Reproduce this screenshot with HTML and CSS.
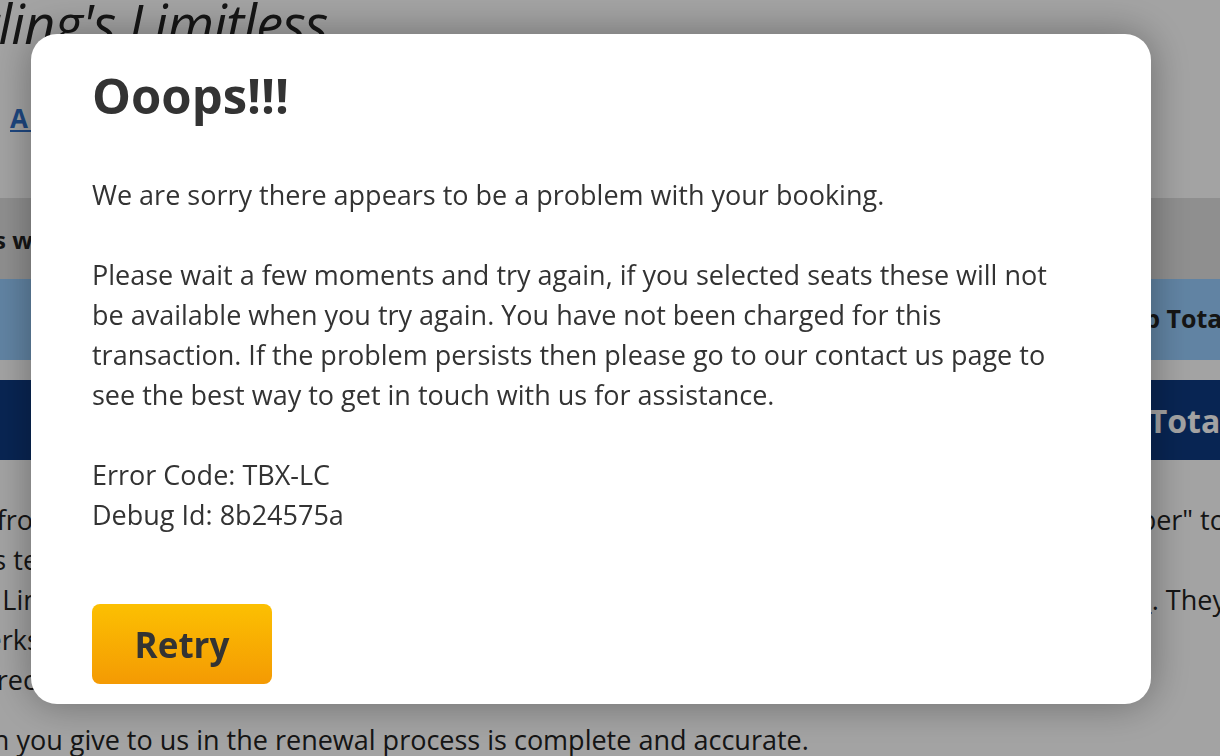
FILE: index.html
```html
<!DOCTYPE html>
<html lang="en">
<head>
    <meta charset="UTF-8">
    <meta name="viewport" content="width=device-width, initial-scale=1.0">
    <title>Renew your Limitless card</title>
    <link rel="stylesheet" href="styles.css">
</head>
<body>
    <div class="page">
        <h1 class="title">Sterling's Limitless</h1>
        <p class="crumbs"><a href="#">A guide to renewing your card</a></p>

        <div class="notice">Items will be held for 15 minutes while you complete your renewal.</div>
        <div class="row row-sub"><span>Sub Total</span></div>
        <div class="row row-total"><span>Total</span></div>

        <div class="terms">
            <div class="line">
                <span>is from the day you renew.</span>
                <span>For someone else, select "Renew Member" to</span>
            </div>
            <div class="line">his terms will carry over to the new card.</div>
            <div class="line">
                <span>of Limitless are listed</span>
                <span>on our <a href="#">membership page</a>. They</span>
            </div>
            <div class="line">perks start as soon as the renewal is confirmed.</div>
            <div class="line">is received by our team.</div>
        </div>
        <p class="closing">Please check the information you give to us in the renewal process is complete and accurate.</p>
    </div>

    <div class="overlay">
        <div class="modal" role="dialog">
            <h2>Ooops!!!</h2>
            <p>We are sorry there appears to be a problem with your booking.</p>
            <p>Please wait a few moments and try again, if you selected seats these will not be available when you try again. You have not been charged for this transaction. If the problem persists then please go to our contact us page to see the best way to get in touch with us for assistance.</p>
            <p class="codes">Error Code: TBX-LC<br>Debug Id: 8b24575a</p>
            <button class="retry">Retry</button>
        </div>
    </div>
</body>
</html>
```

FILE: styles.css
```css
body {
    margin: 0;
    overflow: hidden;
    font-family: 'Open Sans', 'Noto Sans', sans-serif;
    color: #222;
    background-color: #fff;
}

/* page behind the dialog */
.page {
    width: 1330px;
    margin-left: -80px;
}
.title {
    margin: -2px 0 0 -12px;
    font-size: 54px;
    line-height: 50px;
    font-style: italic;
    font-weight: 400;
    letter-spacing: -0.7px;
    white-space: nowrap;
}
.crumbs {
    margin: 50px 0 0;
    padding-left: 90px;
    font-size: 26px;
    line-height: 40px;
    font-weight: 700;
}
.crumbs a {
    color: #2f6fc9;
}
.notice {
    margin-top: 60px;
    padding: 22px 0 19px 18px;
    background-color: #e0e0e0;
    font-size: 24px;
    line-height: 40px;
    font-weight: 700;
    white-space: nowrap;
}
.row {
    display: flex;
    justify-content: flex-end;
    padding: 0 20px;
    font-weight: 700;
}
.row-sub {
    padding-top: 19px;
    padding-bottom: 22px;
    background-color: #98ceff;
    font-size: 25px;
    line-height: 40px;
}
.row-total {
    margin-top: 20px;
    padding-top: 19px;
    padding-bottom: 17px;
    background-color: #0d3a82;
    color: #fff;
    font-size: 32px;
    line-height: 44px;
}
.terms {
    margin-top: 40px;
    padding: 0 24px 0 50px;
    font-size: 27px;
    line-height: 40px;
}
.terms .line {
    display: flex;
    justify-content: space-between;
    white-space: nowrap;
}
.terms a {
    color: #2f6fc9;
}
.closing {
    margin: 20px 0 0 -275px;
    font-size: 27px;
    line-height: 40px;
    white-space: nowrap;
}

/* error dialog */
.overlay {
    position: fixed;
    inset: 0;
    padding: 34px 0 0 31px;
    background-color: rgba(0, 0, 0, 0.36);
}
.modal {
    box-sizing: border-box;
    width: 1120px;
    padding: 31px 81px 20px 61px;
    background-color: #fff;
    border-radius: 26px;
    box-shadow: 0 0 40px rgba(0, 0, 0, 0.35);
    color: #333;
    font-size: 27px;
    line-height: 40px;
}
.modal h2 {
    margin: 0 0 50px;
    font-size: 49px;
    line-height: 60px;
    font-weight: 700;
}
.modal p {
    margin: 0 0 40px;
}
.modal .codes {
    margin-bottom: 69px;
}
.retry {
    display: block;
    width: 180px;
    height: 80px;
    padding: 0;
    border: none;
    border-radius: 8px;
    background: linear-gradient(#fcc002, #f49a03);
    color: #333;
    font-family: 'Open Sans', 'Noto Sans', sans-serif;
    font-size: 35px;
    font-weight: 700;
    cursor: pointer;
}
```
